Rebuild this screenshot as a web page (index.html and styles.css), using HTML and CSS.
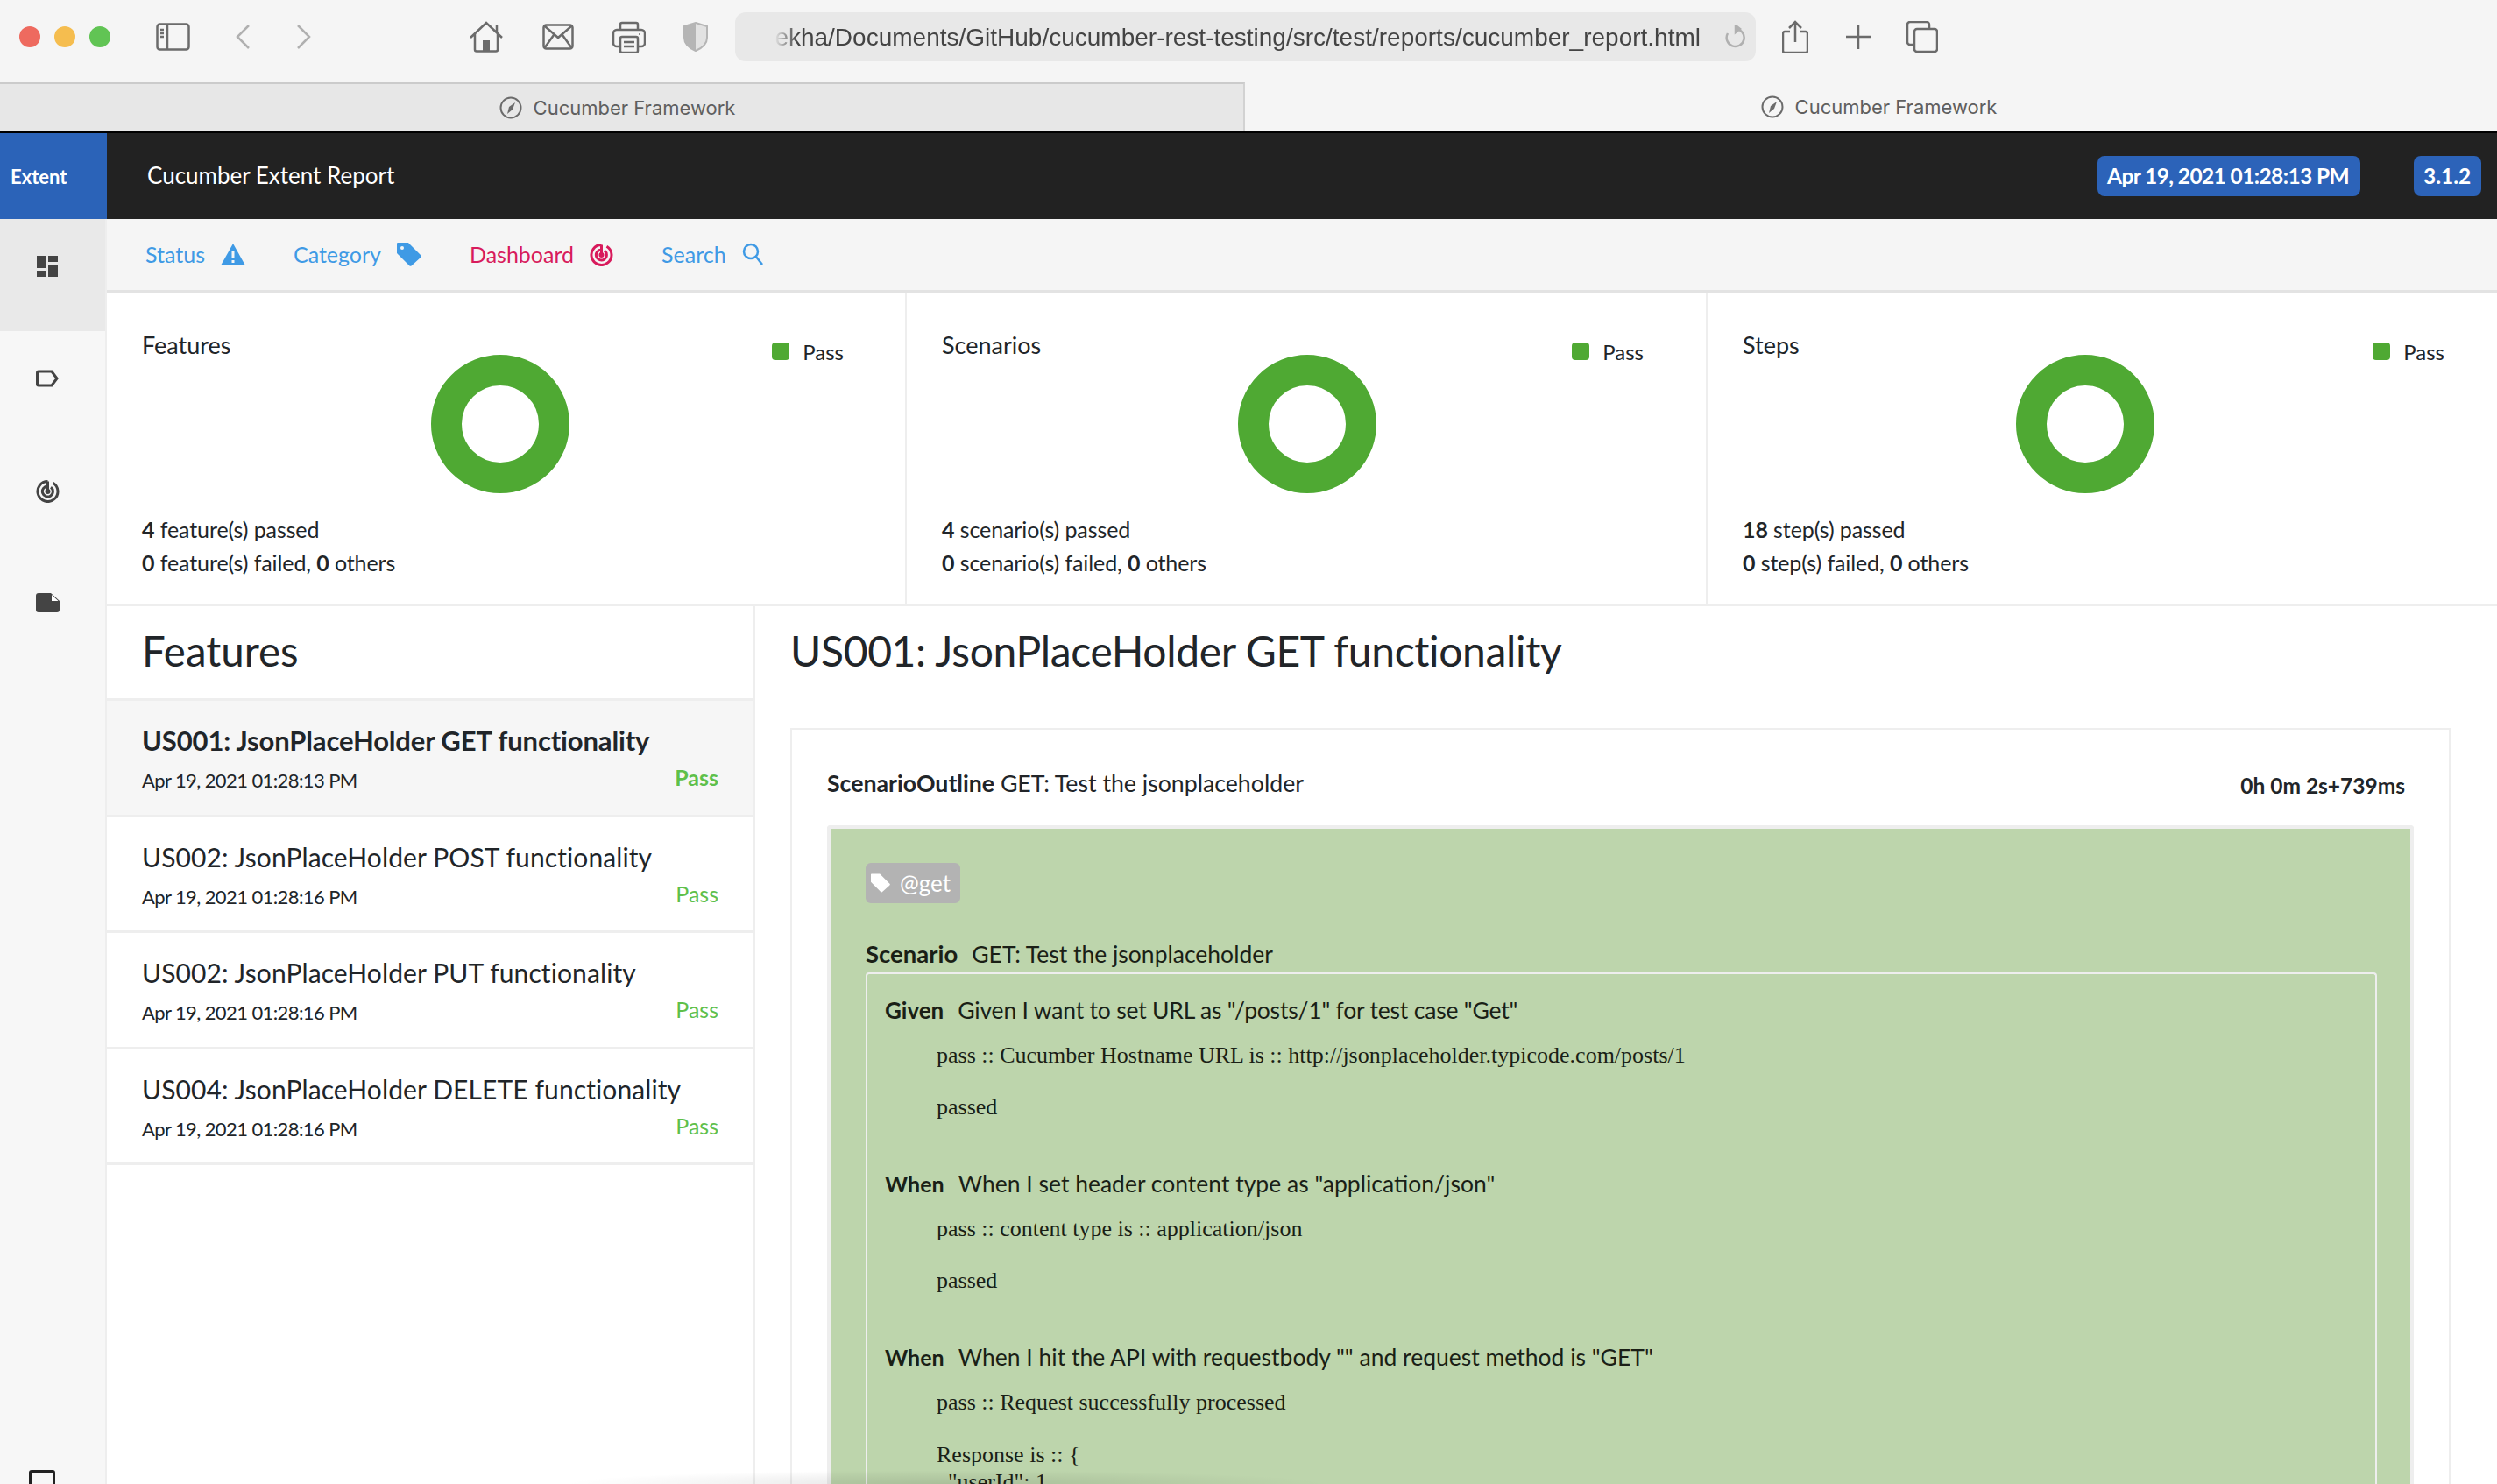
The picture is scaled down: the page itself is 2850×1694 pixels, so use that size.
FILE: index.html
```html
<!DOCTYPE html>
<html lang="en">
<head>
    <meta charset="UTF-8">
    <title>Cucumber Framework</title>
    <link rel="stylesheet" href="styles.css">
</head>
<body>
    <div class="toolbar">
        <div class="lights">
            <span class="light red"></span>
            <span class="light yellow"></span>
            <span class="light green"></span>
        </div>
        <svg class="tool icon-sidebar" width="39" height="32" viewBox="0 0 39 32"><rect x="1.5" y="1.5" width="36" height="29" rx="3"/><path d="M13 2v28M5 8h4M5 12h4M5 16h4"/></svg>
        <svg class="tool light-stroke icon-back" width="18" height="30" viewBox="0 0 18 30"><path d="M16 2 3 15l13 13"/></svg>
        <svg class="tool light-stroke icon-forward" width="18" height="30" viewBox="0 0 18 30"><path d="M2 2l13 13L2 28"/></svg>
        <svg class="tool icon-home" width="38" height="36" viewBox="0 0 38 36"><path d="M1 19 19 2l18 17M6 15v17.500a2 2 0 0 0 2 2h22a2 2 0 0 0 2-2V15M31 13V4"/><path d="M15 22h8v12h-8z" class="icon-fill"/></svg>
        <svg class="tool icon-mail" width="36" height="30" viewBox="0 0 36 30"><rect x="1.5" y="1.5" width="33" height="27" rx="3"/><path d="m3 3 15 13L33 3M3 27l10-14M33 27 23 13"/></svg>
        <svg class="tool icon-print" width="38" height="37" viewBox="0 0 38 37"><path d="M9 10V4a2 2 0 0 1 2-2h16a2 2 0 0 1 2 2v6M9 29H5a4 4 0 0 1-4-4V14a4 4 0 0 1 4-4h28a4 4 0 0 1 4 4v11a4 4 0 0 1-4 4h-4"/><rect x="9" y="18" width="20" height="18" rx="2"/><path d="M13 24h12M13 29h12"/><circle cx="31" cy="15" r="1" class="icon-fill"/></svg>
        <svg class="icon-shield" width="28" height="34" viewBox="0 0 28 34"><path d="M14 1 27 5v13c0 7-6 12-13 15C7 30 1 25 1 18V5z" fill="#e2e2e2" stroke="#b5b5b5" stroke-width="2"/><path d="M14 1 1 5v13c0 7 6 12 13 15z" fill="#b5b5b5"/></svg>
        <div class="urlbar">
            <span class="url">ekha/Documents/GitHub/cucumber-rest-testing/src/test/reports/cucumber_report.html</span>
            <svg class="tool light-stroke icon-reload" width="24" height="28" viewBox="0 0 24 28"><path d="M13 5a10 10 0 1 1-9 5M13 1v8l5-4z"/></svg>
        </div>
        <svg class="tool icon-share" width="30" height="38" viewBox="0 0 30 38"><path d="M9 13H3a2 2 0 0 0-2 2v20a2 2 0 0 0 2 2h24a2 2 0 0 0 2-2V15a2 2 0 0 0-2-2h-6M15 25V2M8 9l7-7 7 7"/></svg>
        <svg class="tool icon-plus" width="28" height="28" viewBox="0 0 28 28"><path d="M14 0v28M0 14h28"/></svg>
        <svg class="tool icon-tabs" width="36" height="36" viewBox="0 0 36 36"><path d="M8 27H4a3 3 0 0 1-3-3V4a3 3 0 0 1 3-3h19a3 3 0 0 1 3 3v4"/><rect x="9" y="9" width="26" height="26" rx="3"/></svg>
    </div>

    <div class="tabs">
        <div class="tab tab-back">
            <svg class="compass" width="26" height="26" viewBox="0 0 26 26"><circle cx="13" cy="13" r="11.5"/><path d="M18 7 15 15 9 20l2-8z" class="needle"/></svg>
            <span>Cucumber Framework</span>
        </div>
        <div class="tab tab-front">
            <svg class="compass" width="26" height="26" viewBox="0 0 26 26"><circle cx="13" cy="13" r="11.5"/><path d="M18 7 15 15 9 20l2-8z" class="needle"/></svg>
            <span>Cucumber Framework</span>
        </div>
    </div>

    <header class="topbar">
        <div class="brand">Extent</div>
        <div class="report-name">Cucumber Extent Report</div>
        <div class="badge badge-date">Apr 19, 2021 01:28:13 PM</div>
        <div class="badge badge-version">3.1.2</div>
    </header>

    <div class="layout">
        <aside class="sidebar">
            <div class="side-item active">
                <svg width="24" height="24" viewBox="0 0 24 24" fill="#444"><path d="M0 0h11v14H0zM13 0h11v7H13zM13 10h11v14H13zM0 17h11v7H0z"/></svg>
            </div>
            <div class="side-item side-label">
                <svg width="26" height="20" viewBox="0 0 26 20" fill="none" stroke="#444" stroke-width="3"><path d="M3 2h15l6 8-6 8H3a1.500 1.500 0 0 1-1.500-1.500v-13A1.500 1.500 0 0 1 3 2z"/></svg>
            </div>
            <div class="side-item side-radar">
                <svg width="27" height="27" viewBox="0 0 27 27" fill="none" stroke="#444" stroke-width="3"><path d="M13.500 2.500a11.500 11.500 0 1 0 6 1.700M13.500 8a6 6 0 1 0 3.500 1.200M13.500 2.500V14"/><circle cx="13.500" cy="14" r="1.500" fill="#444"/></svg>
            </div>
            <div class="side-item side-file">
                <svg width="27" height="22" viewBox="0 0 27 22" fill="#444"><path d="M3 0h14l10 9v10a3 3 0 0 1-3 3H3a3 3 0 0 1-3-3V3a3 3 0 0 1 3-3z"/><path d="M18 2v7h7.500z" fill="#fff"/></svg>
            </div>
            <div class="side-foot"><span class="foot-box"></span></div>
        </aside>

        <main class="main">
            <nav class="nav">
                <a class="nav-link">Status
                    <svg width="28" height="25" viewBox="0 0 28 25"><path d="M14 0 28 25H0z" fill="#3f9ae5"/><path d="M12.500 9h3v8h-3zM12.500 19h3v3h-3z" fill="#f5f5f5"/></svg>
                </a>
                <a class="nav-link">Category
                    <svg width="28" height="27" viewBox="0 0 28 27"><path d="M1 0h12l14 14a2 2 0 0 1 0 3l-10 9a2 2 0 0 1-3 0L0 12V1a1 1 0 0 1 1-1z" fill="#3f9ae5"/><circle cx="6" cy="6" r="2" fill="#f5f5f5"/></svg>
                </a>
                <a class="nav-link nav-active">Dashboard
                    <svg width="27" height="27" viewBox="0 0 27 27" fill="none" stroke="#d81b5c" stroke-width="3"><path d="M13.500 2.500a11.500 11.500 0 1 0 6 1.700M13.500 8a6 6 0 1 0 3.500 1.200M13.500 2.500V14"/><circle cx="13.500" cy="14" r="1.500" fill="#d81b5c"/></svg>
                </a>
                <a class="nav-link">Search
                    <svg width="24" height="26" viewBox="0 0 24 26" fill="none" stroke="#3f9ae5" stroke-width="2.500"><circle cx="10" cy="10" r="8"/><path d="m16 16 7 9"/></svg>
                </a>
            </nav>

            <section class="cards">
                <div class="card card-features">
                    <div class="card-top">
                        <div class="card-title">Features</div>
                        <div class="donut"></div>
                        <div class="legend"><span class="legend-dot"></span>Pass</div>
                    </div>
                    <p class="card-line"><b>4</b> feature(s) passed</p>
                    <p class="card-line"><b>0</b> feature(s) failed, <b>0</b> others</p>
                </div>
                <div class="card card-scenarios">
                    <div class="card-top">
                        <div class="card-title">Scenarios</div>
                        <div class="donut"></div>
                        <div class="legend"><span class="legend-dot"></span>Pass</div>
                    </div>
                    <p class="card-line"><b>4</b> scenario(s) passed</p>
                    <p class="card-line"><b>0</b> scenario(s) failed, <b>0</b> others</p>
                </div>
                <div class="card card-steps">
                    <div class="card-top">
                        <div class="card-title">Steps</div>
                        <div class="donut"></div>
                        <div class="legend"><span class="legend-dot"></span>Pass</div>
                    </div>
                    <p class="card-line"><b>18</b> step(s) passed</p>
                    <p class="card-line"><b>0</b> step(s) failed, <b>0</b> others</p>
                </div>
            </section>

            <section class="split">
                <div class="list-pane">
                    <h2 class="list-heading">Features</h2>
                    <div class="feature selected">
                        <div class="feature-name">US001: JsonPlaceHolder GET functionality</div>
                        <div class="feature-meta"><span class="feature-date">Apr 19, 2021 01:28:13 PM</span><span class="feature-status">Pass</span></div>
                    </div>
                    <div class="feature">
                        <div class="feature-name">US002: JsonPlaceHolder POST functionality</div>
                        <div class="feature-meta"><span class="feature-date">Apr 19, 2021 01:28:16 PM</span><span class="feature-status">Pass</span></div>
                    </div>
                    <div class="feature">
                        <div class="feature-name">US002: JsonPlaceHolder PUT functionality</div>
                        <div class="feature-meta"><span class="feature-date">Apr 19, 2021 01:28:16 PM</span><span class="feature-status">Pass</span></div>
                    </div>
                    <div class="feature">
                        <div class="feature-name">US004: JsonPlaceHolder DELETE functionality</div>
                        <div class="feature-meta"><span class="feature-date">Apr 19, 2021 01:28:16 PM</span><span class="feature-status">Pass</span></div>
                    </div>
                </div>

                <div class="detail-pane">
                    <h2 class="detail-heading">US001: JsonPlaceHolder GET functionality</h2>
                    <div class="outline">
                        <div class="outline-head">
                            <div><b>ScenarioOutline</b> GET: Test the jsonplaceholder</div>
                            <div class="outline-time">0h 0m 2s+739ms</div>
                        </div>
                        <div class="scenario">
                            <div class="tag">
                                <svg width="22" height="24" viewBox="0 0 28 27"><path d="M1 0h12l14 14a2 2 0 0 1 0 3l-10 9a2 2 0 0 1-3 0L0 12V1a1 1 0 0 1 1-1z" fill="#fff"/></svg>
                                @get
                            </div>
                            <div class="scenario-name"><b>Scenario</b><span>GET: Test the jsonplaceholder</span></div>
                            <div class="steps">
                                <div class="step">
                                    <div class="step-name"><b>Given</b><span class="step-tight">Given I want to set URL as "/posts/1" for test case "Get"</span></div>
                                    <p class="log">pass :: Cucumber Hostname URL is :: http://jsonplaceholder.typicode.com/posts/1</p>
                                    <p class="log">passed</p>
                                </div>
                                <div class="step">
                                    <div class="step-name step-when"><b>When</b><span>When I set header content type as "application/json"</span></div>
                                    <p class="log">pass :: content type is :: application/json</p>
                                    <p class="log">passed</p>
                                </div>
                                <div class="step">
                                    <div class="step-name step-when"><b>When</b><span>When I hit the API with requestbody "" and request method is "GET"</span></div>
                                    <p class="log">pass :: Request successfully processed</p>
                                    <p class="log log-json">Response is :: {
  "userId": 1,</p>
                                </div>
                            </div>
                        </div>
                    </div>
                </div>
            </section>
        </main>
    </div>

    <div class="bottom-fade"></div>
</body>
</html>
```

FILE: styles.css
```css
* {
    box-sizing: border-box;
}

html, body {
    height: 1694px;
    overflow: hidden;
}

body {
    margin: 0;
    position: relative;
    background: #fff;
    color: #212529;
    font-family: Lato, sans-serif;
    font-size: 26px;
}

/* browser chrome */
.toolbar {
    display: flex;
    align-items: center;
    height: 94px;
    padding: 0 0 10px 22px;
    background: #f5f5f5;
}

.lights {
    display: flex;
    gap: 16px;
}

.light {
    width: 24px;
    height: 24px;
    border-radius: 50%;
}

.light.red { background: #ee6a5f; }
.light.yellow { background: #f5bd4f; }
.light.green { background: #61c454; }

.tool {
    flex: none;
    fill: none;
    stroke: #6b6b6b;
    stroke-width: 2.5;
}

.tool .icon-fill {
    fill: #6b6b6b;
    stroke: none;
}

.light-stroke {
    stroke: #b0b0b0;
}

.icon-sidebar { margin-left: 52px; }
.icon-back { margin-left: 51px; }
.icon-forward { margin-left: 52px; }
.icon-home { margin-left: 180px; }
.icon-mail { margin-left: 45px; }
.icon-print { margin-left: 44px; }
.icon-shield { margin-left: 43px; flex: none; }
.icon-share { margin-left: 30px; }
.icon-plus { margin-left: 43px; }
.icon-tabs { margin-left: 41px; }

.urlbar {
    display: flex;
    align-items: center;
    justify-content: flex-end;
    flex: none;
    width: 1165px;
    height: 56px;
    margin-left: 31px;
    padding-right: 12px;
    border-radius: 12px;
    background: #e8e8e8;
}

.url {
    margin-top: 2px;
    margin-right: 27px;
    color: #444;
    font-family: "Liberation Sans", sans-serif;
    font-size: 28px;
    white-space: nowrap;
    -webkit-mask-image: linear-gradient(90deg, transparent 0, #000 26px);
    mask-image: linear-gradient(90deg, transparent 0, #000 26px);
}

.tabs {
    display: flex;
    height: 56px;
    background: #f5f5f5;
}

.tab {
    display: flex;
    align-items: center;
    justify-content: center;
    gap: 13px;
    color: #5f5f5f;
    font-family: Inter, sans-serif;
    font-size: 22px;
}

.tab-back {
    width: 1421px;
    padding-right: 10px;
    background: #e7e7e7;
    border-top: 2px solid #cbcbcb;
    border-right: 2px solid #d2d2d2;
}

.tab-front {
    flex: 1;
    padding-left: 18px;
}

.compass circle {
    fill: none;
    stroke: #6b6b6b;
    stroke-width: 2;
}

.compass .needle {
    fill: #6b6b6b;
}

/* report header */
.topbar {
    display: flex;
    align-items: center;
    height: 100px;
    background: #222;
    border-top: 2px solid #000;
    color: #fff;
}

.brand {
    display: flex;
    align-items: center;
    align-self: stretch;
    width: 122px;
    padding-left: 12px;
    background: #2b63b8;
    font-size: 22px;
    font-weight: 700;
}

.report-name {
    margin-left: 46px;
    margin-right: auto;
    margin-bottom: 2px;
    font-size: 26px;
}

.badge {
    height: 46px;
    padding: 0 11px;
    border-radius: 8px;
    background: #2c63b9;
    font-size: 24.500px;
    font-weight: 700;
    line-height: 46px;
}

.badge-date {
    width: 300px;
    letter-spacing: -0.6px;
    white-space: nowrap;
}

.badge-version {
    width: 77px;
    margin-left: 61px;
    margin-right: 18px;
}

/* app layout */
.layout {
    display: flex;
    height: 1444px;
}

.sidebar {
    display: flex;
    flex-direction: column;
    flex: none;
    width: 122px;
    background: #f7f7f7;
    border-right: 2px solid #eee;
}

.side-item {
    display: flex;
    justify-content: center;
    height: 128px;
    padding: 42px 12px 0 0;
}

.side-item.active {
    background: #e9e9e9;
}

.side-label {
    padding-top: 44px;
}

.side-radar {
    padding-top: 41px;
}

.side-file {
    padding-top: 43px;
}

.side-foot {
    height: 16px;
    margin-top: auto;
    padding-left: 33px;
    overflow: hidden;
}

.foot-box {
    display: block;
    width: 30px;
    height: 40px;
    border: 3px solid #222;
    border-radius: 3px;
}

.main {
    display: flex;
    flex-direction: column;
    flex: 1;
    min-width: 0;
}

.nav {
    display: flex;
    align-items: center;
    gap: 55px;
    flex: none;
    height: 84px;
    padding: 0 0 1px 44px;
    background: #f5f5f5;
    border-bottom: 3px solid #e3e3e3;
}

.nav-link {
    display: flex;
    align-items: center;
    gap: 18px;
    color: #3f9ae5;
    font-size: 25px;
}

.nav-active {
    color: #d81b5c;
}

/* dashboard cards */
.cards {
    display: flex;
    flex: none;
    height: 358px;
    border-bottom: 3px solid #eee;
}

.card {
    padding: 0 70px 0 40px;
    border-right: 2px solid #eee;
}

.card-features { width: 913px; }
.card-scenarios { width: 914px; padding-right: 71px; }
.card-steps { flex: 1; padding-right: 60px; border-right: 0; }

.card-top {
    display: grid;
    grid-template-columns: 330px 158px 1fr;
    height: 251px;
    padding-top: 38px;
}

.card-scenarios .card-top { grid-template-columns: 338px 158px 1fr; }
.card-steps .card-top { grid-template-columns: 312px 158px 1fr; }

.card-title {
    font-size: 27px;
    line-height: 44px;
}

.donut {
    width: 158px;
    height: 158px;
    margin-top: 33px;
    border: 35px solid #4fa933;
    border-radius: 50%;
}

.legend {
    display: flex;
    align-items: center;
    justify-content: flex-end;
    gap: 15px;
    height: 44px;
    font-size: 24px;
    margin-top: 7px;
}

.legend-dot {
    width: 20px;
    height: 20px;
    border-radius: 4px;
    background: #4fa933;
}

.card-line {
    margin: 0;
    font-size: 25px;
    letter-spacing: -0.1px;
    line-height: 38px;
}

/* feature list */
.split {
    display: flex;
    flex: 1;
    min-height: 0;
}

.list-pane {
    flex: none;
    width: 740px;
    border-right: 2px solid #eee;
}

.list-heading {
    height: 108px;
    margin: 0;
    padding-left: 40px;
    border-bottom: 3px solid #eee;
    font-size: 47.500px;
    font-weight: 400;
    line-height: 102px;
}

.feature {
    height: 132.500px;
    padding: 26px 40px 0;
    border-bottom: 3px solid #eee;
}

.feature.selected {
    background: #f6f6f6;
}

.feature.selected .feature-name {
    font-size: 31px;
    font-weight: 700;
    letter-spacing: -0.15px;
}

.feature-name {
    font-size: 30px;
    letter-spacing: 0.1px;
    line-height: 38px;
}

.feature-meta {
    display: flex;
    align-items: center;
    justify-content: space-between;
    margin-top: 10px;
    font-size: 22px;
    letter-spacing: -0.6px;
    line-height: 34px;
}

.feature-status {
    color: #5ec04a;
    font-size: 25px;
    letter-spacing: 0;
    margin-top: -8px;
}

.feature.selected .feature-status {
    font-weight: 700;
}

/* scenario detail */
.detail-pane {
    flex: 1;
    min-width: 0;
    padding: 0 53px 0 40px;
}

.detail-heading {
    height: 139px;
    margin: 0;
    font-size: 48px;
    font-weight: 400;
    letter-spacing: -0.35px;
    line-height: 102px;
}

.outline {
    padding: 0 40px;
    border: 2px solid #eee;
    border-bottom: 0;
}

.outline-head {
    display: flex;
    justify-content: space-between;
    height: 109px;
    padding-top: 44px;
    font-size: 26.700px;
    line-height: 34px;
}

.outline-time {
    margin-top: 3px;
    margin-right: 10px;
    font-weight: 700;
    font-size: 24.500px;
}

.scenario {
    padding: 39px 38px 0 40px;
    border: 4px solid #eee;
    border-bottom: 0;
    border-radius: 4px 4px 0 0;
    background: #bdd5ac;
    color: #1a1f16;
}

.tag {
    display: flex;
    align-items: center;
    gap: 11px;
    width: 108px;
    height: 46px;
    padding-left: 6px;
    border-radius: 6px;
    background: #b3b3b3;
    color: #fff;
    font-size: 26px;
}

.scenario-name {
    margin-top: 41px;
    font-size: 26.500px;
    line-height: 34px;
}

.scenario-name b {
    font-size: 27.500px;
}

.scenario-name b,
.step-name b {
    margin-right: 16px;
}

.steps {
    margin-top: 4px;
    padding: 24px 20px 0;
    border: 2px solid #eee;
    border-bottom: 0;
    border-radius: 4px 4px 0 0;
}

.step {
    margin-bottom: 55px;
}

.step-name {
    font-size: 26.500px;
    line-height: 34px;
}

.step-name b {
    font-size: 26px;
}

.step-when b {
    font-size: 25px;
}

.step-tight {
    letter-spacing: -0.2px;
}

.log {
    margin: 29px 0 0 59px;
    font-family: "Liberation Serif", serif;
    font-size: 26px;
    line-height: 30px;
}

.step-name + .log {
    margin-top: 20px;
}

.log-json {
    white-space: pre;
    line-height: 31px;
}

/* soft shadow along the bottom edge */
.bottom-fade {
    position: absolute;
    bottom: 0;
    left: 640px;
    width: 880px;
    height: 16px;
    background: radial-gradient(ellipse at 50% 100%, rgba(0, 0, 0, 0.1), rgba(0, 0, 0, 0) 70%);
}
```
